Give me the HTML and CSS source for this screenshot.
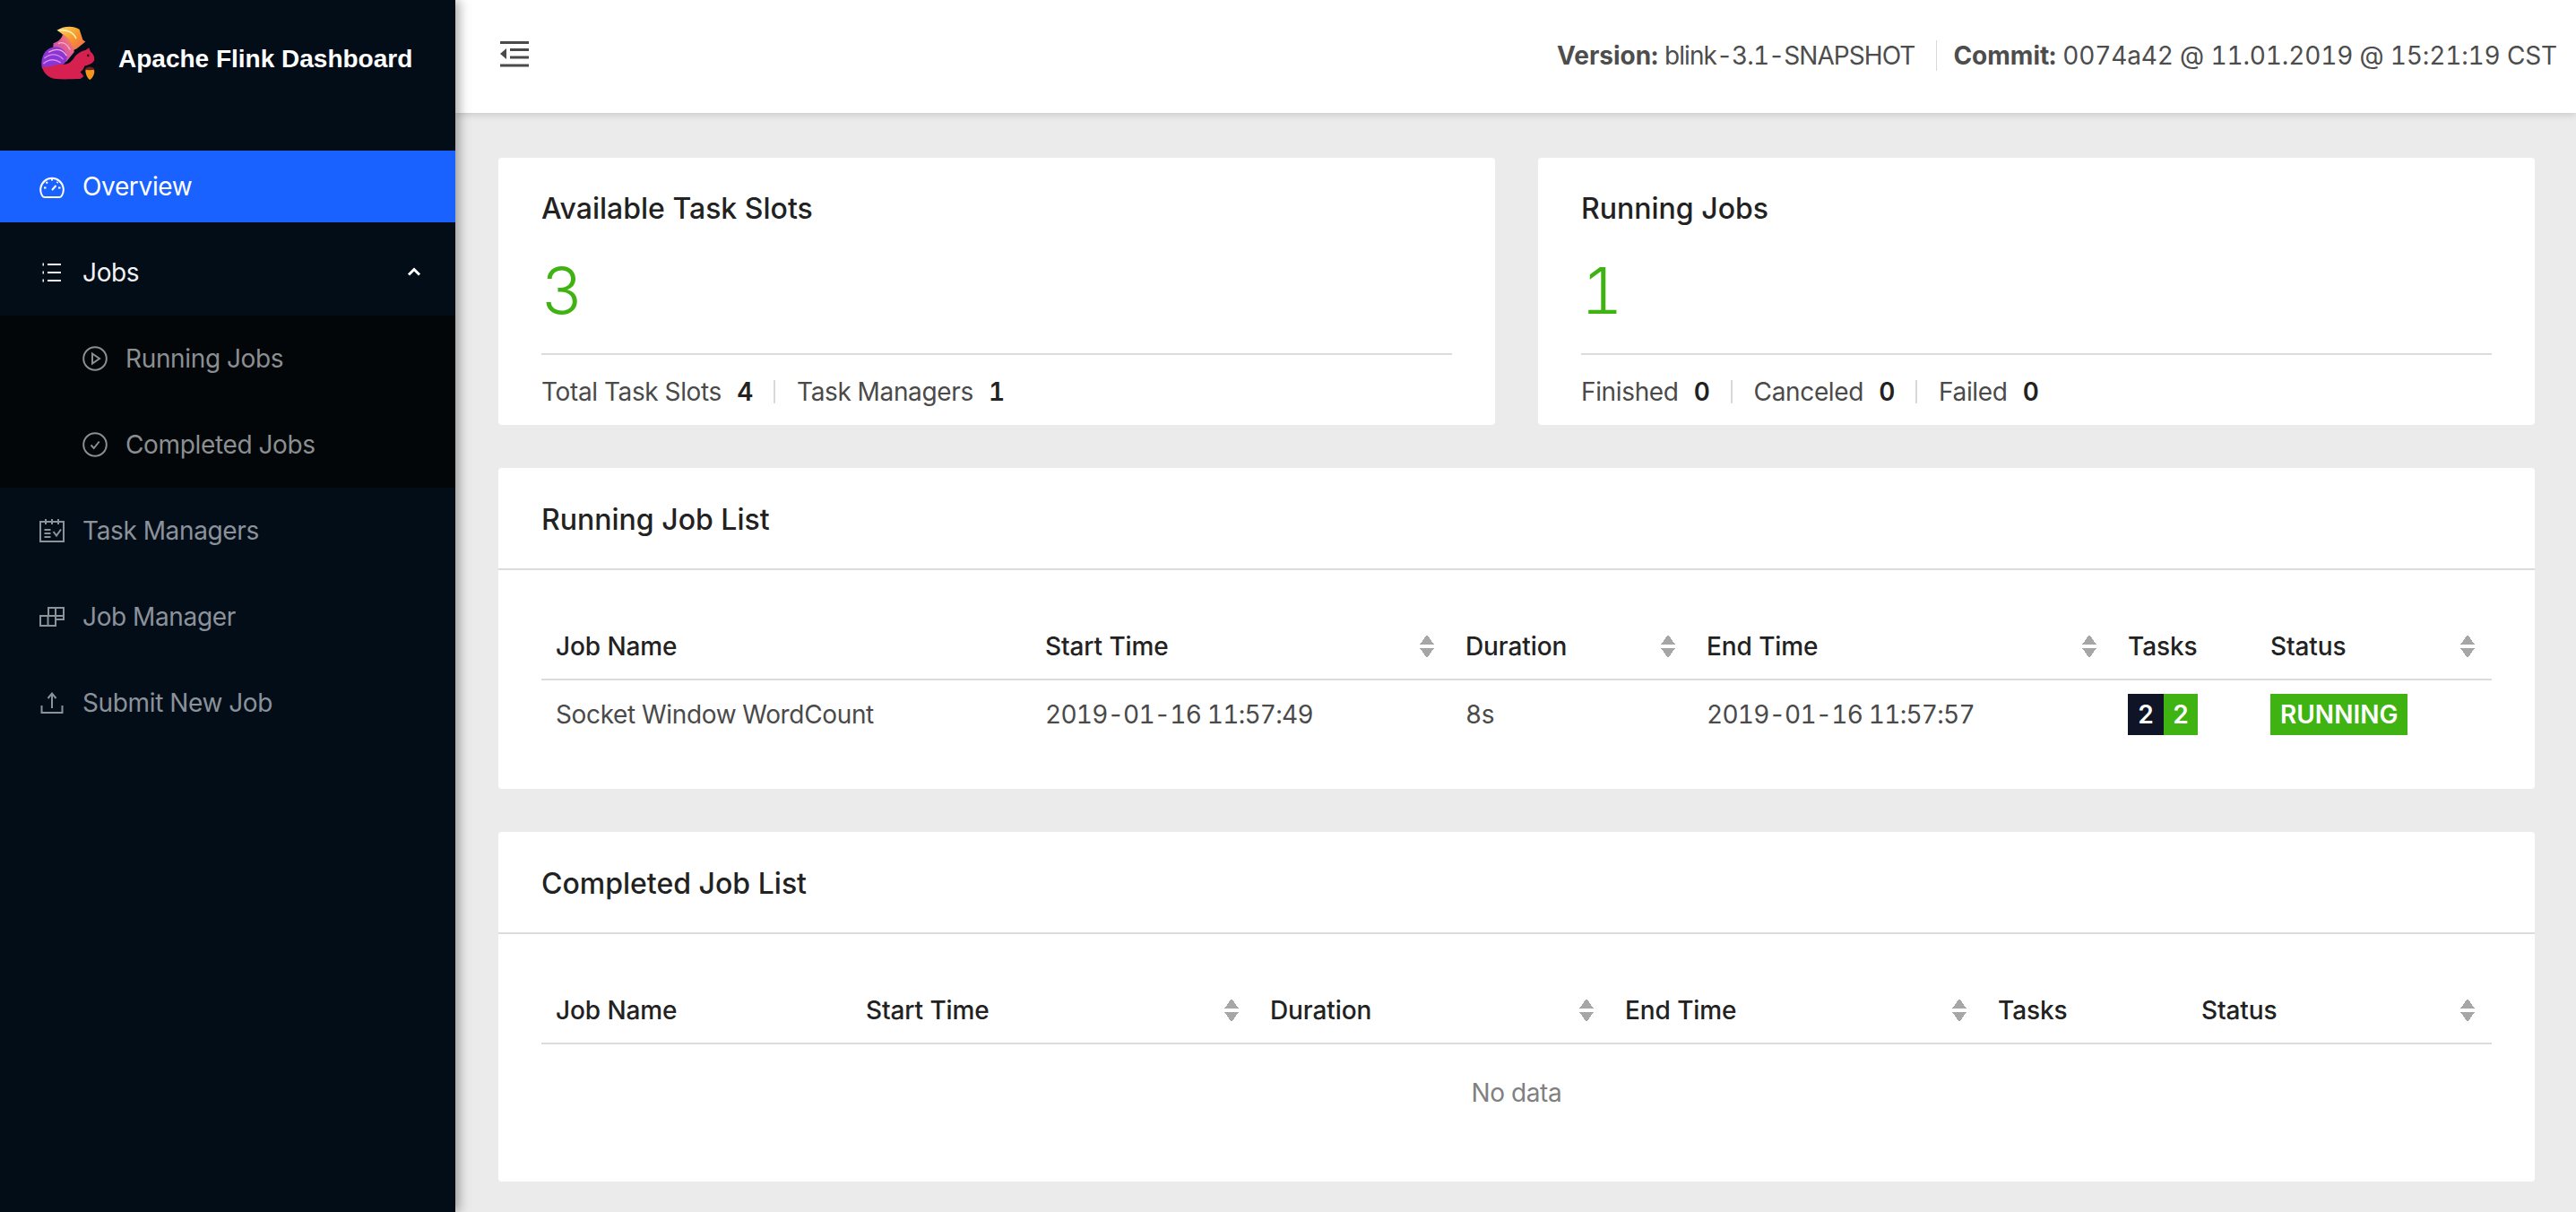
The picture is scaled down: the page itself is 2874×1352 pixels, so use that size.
FILE: index.html
```html
<!DOCTYPE html>
<html lang="en">
<head>
  <meta charset="UTF-8" />
  <title>Apache Flink Dashboard</title>
  <link rel="stylesheet" href="styles.css">
</head>
<body>

  <aside class="sidebar">
    <div class="brand">
      <svg class="logo" viewBox="0 0 64 64">
        <defs>
          <linearGradient id="tipGrad" x1="0" y1="0" x2="1" y2="1">
            <stop offset="0" stop-color="#fbd96b"/>
            <stop offset="0.5" stop-color="#f79a2a"/>
            <stop offset="1" stop-color="#ef5f5f"/>
          </linearGradient>
          <linearGradient id="midGrad" x1="0" y1="1" x2="1" y2="0">
            <stop offset="0" stop-color="#a83fd0"/>
            <stop offset="0.6" stop-color="#e8608e"/>
            <stop offset="1" stop-color="#f7a04a"/>
          </linearGradient>
        </defs>
        <path fill="url(#tipGrad)" d="M19 6C26 1 38 0 45 5L49 17L52 19L42 27L36 30C34 20 28 11 19 6Z"/>
        <path fill="url(#midGrad)" d="M15 21C21 19 25 15 26 10C33 15 38 22 39 31L30 42L14 40Z"/>
        <path fill="#8a35d4" d="M2 50C0 40 3 31 10 27C16 24 22 24 27 29C31 34 32 38 28 44L12 52Z"/>
        <g fill="none" stroke-linecap="round">
          <path stroke="#fff2b0" stroke-width="1.600" d="M22 6C30 5 38 8 41 15"/>
          <path stroke="#f6b0c8" stroke-width="1.400" d="M21 21C26 19 31 22 34 28M10 31C18 26 26 28 30 35"/>
          <path stroke="#d68af0" stroke-width="1.400" d="M5 38C12 32 20 33 26 39M4 44C10 39 17 39 23 43"/>
        </g>
        <path fill="#d6204f" d="M2 47C3 55 9 61 18 62C28 63 38 62 46 62L50 59L46 54C49 52 50 50 51 47C55 46 59 45 62 41C63 37 61 33 58 31L56 26L52 29C46 30 41 34 38 39C35 43 31 46 26 45C18 44 10 51 2 47Z"/>
        <circle cx="55" cy="35" r="1.400" fill="#2a0a16"/>
        <path fill="#f7941d" d="M52 52C54 49 60 49 62 52C63 56 60 61 57 63C54 61 52 56 52 52Z"/>
        <path fill="#6e2418" d="M51 51C54 47 60 47 63 51C58 52 55 52 51 51Z"/>
      </svg>
      <span class="brand-name">Apache Flink Dashboard</span>
    </div>

    <ul class="menu">
      <li class="menu-item active">
        <svg class="menu-icon" viewBox="0 0 28 28"><path d="M6 26h16a3 3 0 0 0 3-1.800A12.800 12.800 0 1 0 3 24.200 3 3 0 0 0 6 26z"/><path d="M14 18l4.500-5M14 5v2.500M5 15.500h2.500M21 15.500h2.500M7.500 9l1.500 1.500M20.500 9l-1 1"/></svg>
        Overview
      </li>
      <li class="menu-item open">
        <svg class="menu-icon" viewBox="0 0 28 28"><path d="M9 5h15M9 14h15M9 23h15"/><path class="dots" d="M3.500 5h1.500M3.500 14h1.500M3.500 23h1.500"/></svg>
        Jobs
        <svg class="arrow" viewBox="0 0 16 12"><path d="M2 9.500l6-6 6 6"/></svg>
      </li>
      <li class="submenu">
        <ul>
          <li class="menu-item sub">
            <svg class="menu-icon" viewBox="0 0 28 28"><circle cx="14" cy="14" r="12.800"/><path d="M11 8.500l8 5.500-8 5.500z"/></svg>
            Running Jobs
          </li>
          <li class="menu-item sub">
            <svg class="menu-icon" viewBox="0 0 28 28"><circle cx="14" cy="14" r="12.800"/><path d="M9.500 14.500l3.200 3.500 6-7.500"/></svg>
            Completed Jobs
          </li>
        </ul>
      </li>
      <li class="menu-item">
        <svg class="menu-icon" viewBox="0 0 28 28"><path d="M1 4h26v22H1zM7 1v6M14 1v6M21 1v6M5.500 13h7M5.500 17h7M5.500 21h7M15.500 15l3.500 4.500 5-7"/></svg>
        Task Managers
      </li>
      <li class="menu-item">
        <svg class="menu-icon" viewBox="0 0 28 28"><path d="M1 13h17v11H1zM9.500 13v11M10 13V4h17v9H18M18 4v9M18 13v4h9v-4"/></svg>
        Job Manager
      </li>
      <li class="menu-item">
        <svg class="menu-icon" viewBox="0 0 28 28"><path d="M14 20V5M9.500 9L14 3.500 18.500 9M2.500 17v8h23v-8"/></svg>
        Submit New Job
      </li>
    </ul>
  </aside>

  <div class="main">
    <header class="topbar">
      <svg class="toggle" viewBox="0 0 32 29"><path d="M0 1.500h32M11 9.500h21M11 18h21M0 27h32"/><path class="toggle-arrow" d="M0 14l7-6v12z"/></svg>
      <div class="build">
        <span class="build-item"><b>Version:</b> <span class="time">blink-3.1-SNAPSHOT</span></span>
        <span class="build-item"><b>Commit:</b> 0074a42 @ 11.01.2019 @ 15:21:19 CST</span>
      </div>
    </header>

    <div class="content">
      <div class="stat-row">
        <section class="card stat">
          <h3 class="card-title">Available Task Slots</h3>
          <div class="stat-value">3</div>
          <div class="stat-footer">
            <span class="stat-item">Total Task Slots <b>4</b></span>
            <span class="stat-item">Task Managers <b>1</b></span>
          </div>
        </section>
        <section class="card stat">
          <h3 class="card-title">Running Jobs</h3>
          <div class="stat-value">1</div>
          <div class="stat-footer">
            <span class="stat-item">Finished <b>0</b></span>
            <span class="stat-item">Canceled <b>0</b></span>
            <span class="stat-item">Failed <b>0</b></span>
          </div>
        </section>
      </div>

      <section class="card list running-list">
        <h3 class="list-title">Running Job List</h3>
        <div class="list-body">
          <table>
            <colgroup>
              <col class="r1"><col class="r2"><col class="r3"><col class="r4"><col class="r5"><col>
            </colgroup>
            <thead>
              <tr>
                <th>Job Name</th>
                <th><div class="th-sort">Start Time <span class="sorter"></span></div></th>
                <th><div class="th-sort">Duration <span class="sorter"></span></div></th>
                <th><div class="th-sort">End Time <span class="sorter"></span></div></th>
                <th>Tasks</th>
                <th><div class="th-sort">Status <span class="sorter"></span></div></th>
              </tr>
            </thead>
            <tbody>
              <tr>
                <td>Socket Window WordCount</td>
                <td class="time">2019-01-16 11:57:49</td>
                <td>8s</td>
                <td class="time">2019-01-16 11:57:57</td>
                <td><span class="tasks"><span class="task total">2</span><span class="task ok">2</span></span></td>
                <td><span class="status">RUNNING</span></td>
              </tr>
            </tbody>
          </table>
        </div>
      </section>

      <section class="card list">
        <h3 class="list-title">Completed Job List</h3>
        <div class="list-body completed-body">
          <table>
            <colgroup>
              <col class="c1"><col class="c2"><col class="c3"><col class="c4"><col class="c5"><col>
            </colgroup>
            <thead>
              <tr>
                <th>Job Name</th>
                <th><div class="th-sort">Start Time <span class="sorter"></span></div></th>
                <th><div class="th-sort">Duration <span class="sorter"></span></div></th>
                <th><div class="th-sort">End Time <span class="sorter"></span></div></th>
                <th>Tasks</th>
                <th><div class="th-sort">Status <span class="sorter"></span></div></th>
              </tr>
            </thead>
          </table>
          <div class="empty">No data</div>
        </div>
      </section>
    </div>
  </div>

</body>
</html>
```

FILE: styles.css
```css
* {
  box-sizing: border-box;
}

body {
  margin: 0;
  height: 1352px;
  overflow: hidden;
  display: flex;
  font-family: 'Inter', sans-serif;
  font-size: 28px;
  letter-spacing: -0.35px;
  font-variant-numeric: tabular-nums;
  color: #4a4a4a;
  background: #ebebeb;
}

.time {
  letter-spacing: -0.75px;
}

/* sidebar */
.sidebar {
  width: 508px;
  flex-shrink: 0;
  background: #030d18;
  box-shadow: 4px 0 12px rgba(0, 0, 0, 0.35);
  position: relative;
  z-index: 2;
}

.brand {
  height: 168px;
  padding: 27px 0 0 45px;
  display: flex;
  align-items: flex-start;
}

.logo {
  width: 62px;
  height: 64px;
}

.brand-name {
  margin: 22px 0 0 25px;
  font-family: 'Liberation Sans', sans-serif;
  font-weight: 700;
  font-size: 28px;
  line-height: 34px;
  letter-spacing: 0;
  color: #fff;
}

.menu,
.submenu ul {
  margin: 0;
  padding: 0;
  list-style: none;
}

.menu-item {
  height: 80px;
  margin-bottom: 16px;
  padding-left: 44px;
  display: flex;
  align-items: center;
  color: #8b929a;
}

.menu-item.active {
  background: #1a62ff;
  color: #fff;
}

.menu-item.open {
  color: #f2f3f4;
  position: relative;
}

.menu-item.sub {
  padding-left: 92px;
  color: #8b8f92;
}

.submenu {
  background: #020609;
  margin: -8px 0 8px;
  padding: 8px 0;
}

.submenu .menu-item:last-child {
  margin-bottom: 0;
}

.menu-icon {
  width: 28px;
  height: 28px;
  margin-right: 20px;
  flex-shrink: 0;
  fill: none;
  stroke: currentColor;
  stroke-width: 2;
}

.dots {
  stroke-width: 3;
}

.arrow {
  position: absolute;
  left: 454px;
  top: 33px;
  width: 16px;
  height: 12px;
  fill: none;
  stroke: #fff;
  stroke-width: 3;
}

/* top bar */
.main {
  flex: 1;
  min-width: 0;
}

.topbar {
  height: 126px;
  background: #fff;
  box-shadow: 0 2px 8px rgba(0, 0, 0, 0.15);
  padding: 0 21px 0 50px;
  display: flex;
  justify-content: space-between;
  align-items: center;
  position: relative;
}

.toggle {
  width: 32px;
  height: 29px;
  margin-bottom: 5px;
  fill: none;
  stroke: #4a4a4a;
  stroke-width: 3;
}

.toggle-arrow {
  fill: #4a4a4a;
  stroke: none;
}

.build {
  display: flex;
  font-size: 28px;
  letter-spacing: -0.15px;
  color: #4d4d4d;
  margin-top: -2px;
}

.build b {
  font-weight: 700;
  letter-spacing: 0;
}

.build .time {
  letter-spacing: -0.95px;
}

.build-item + .build-item {
  margin-left: 24px;
  padding-left: 18px;
  border-left: 1px solid #d9d9d9;
}

/* cards */
.content {
  padding: 50px 46px 0 48px;
}

.stat-row {
  display: flex;
  gap: 48px;
  margin-bottom: 48px;
}

.card {
  background: #fff;
  border-radius: 4px;
}

.stat {
  flex: 1;
  height: 298px;
  padding: 36px 48px 0;
}

.card-title,
.list-title {
  margin: 0;
  font-size: 32px;
  font-weight: 500;
  line-height: 42px;
  letter-spacing: 0;
  color: #222;
}

.stat-value {
  margin-top: 26px;
  height: 116px;
  font-size: 72px;
  font-weight: 300;
  line-height: 88px;
  color: #3fb312;
  border-bottom: 2px solid #dcdcdc;
}

.stat-footer {
  display: flex;
  margin-top: 23px;
  line-height: 36px;
}

.stat-item b {
  margin-left: 10px;
  font-weight: 600;
  color: #222;
}

.stat-item + .stat-item {
  margin-left: 23px;
  padding-left: 26px;
  background: linear-gradient(#d9d9d9, #d9d9d9) left center / 2px 26px no-repeat;
}

.list {
  margin-bottom: 48px;
}

.running-list {
  height: 358px;
}

.list-title {
  height: 114px;
  padding: 37px 48px 0;
  border-bottom: 2px solid #dcdcdc;
}

.list-body {
  padding: 48px;
}

.completed-body {
  padding-bottom: 45px;
}

table {
  width: 100%;
  table-layout: fixed;
  border-collapse: collapse;
}

.r1 { width: 546px; }
.r2 { width: 469px; }
.r3 { width: 269px; }
.r4 { width: 470px; }
.r5 { width: 159px; }

.c1 { width: 346px; }
.c2 { width: 451px; }
.c3 { width: 396px; }
.c4 { width: 416px; }
.c5 { width: 227px; }

th {
  height: 74px;
  padding: 0 16px;
  text-align: left;
  font-weight: 500;
  letter-spacing: -0.1px;
  color: #222;
  border-bottom: 2px solid #dcdcdc;
}

td {
  height: 76px;
  padding: 0 16px;
}

.th-sort {
  display: flex;
  justify-content: space-between;
  align-items: center;
}

.sorter {
  width: 16px;
  height: 26px;
  margin-right: 3px;
  background:
    linear-gradient(to bottom right, transparent 50%, #a6a6a6 50%) left top / 8px 11px no-repeat,
    linear-gradient(to bottom left, transparent 50%, #a6a6a6 50%) right top / 8px 11px no-repeat,
    linear-gradient(to top right, transparent 50%, #a6a6a6 50%) left bottom / 8px 11px no-repeat,
    linear-gradient(to top left, transparent 50%, #a6a6a6 50%) right bottom / 8px 11px no-repeat;
}

.tasks {
  display: inline-flex;
  vertical-align: middle;
}

.task {
  height: 46px;
  line-height: 46px;
  text-align: center;
  font-weight: 600;
  color: #fff;
}

.task.total {
  width: 40px;
  background: #0f1427;
}

.task.ok {
  width: 38px;
  background: #3fb312;
}

.status {
  display: inline-block;
  height: 46px;
  padding: 0 11px;
  line-height: 46px;
  font-weight: 600;
  letter-spacing: 0;
  color: #fff;
  background: #3fb312;
  vertical-align: middle;
}

.empty {
  height: 108px;
  display: flex;
  align-items: center;
  justify-content: center;
  color: #808080;
}
```
